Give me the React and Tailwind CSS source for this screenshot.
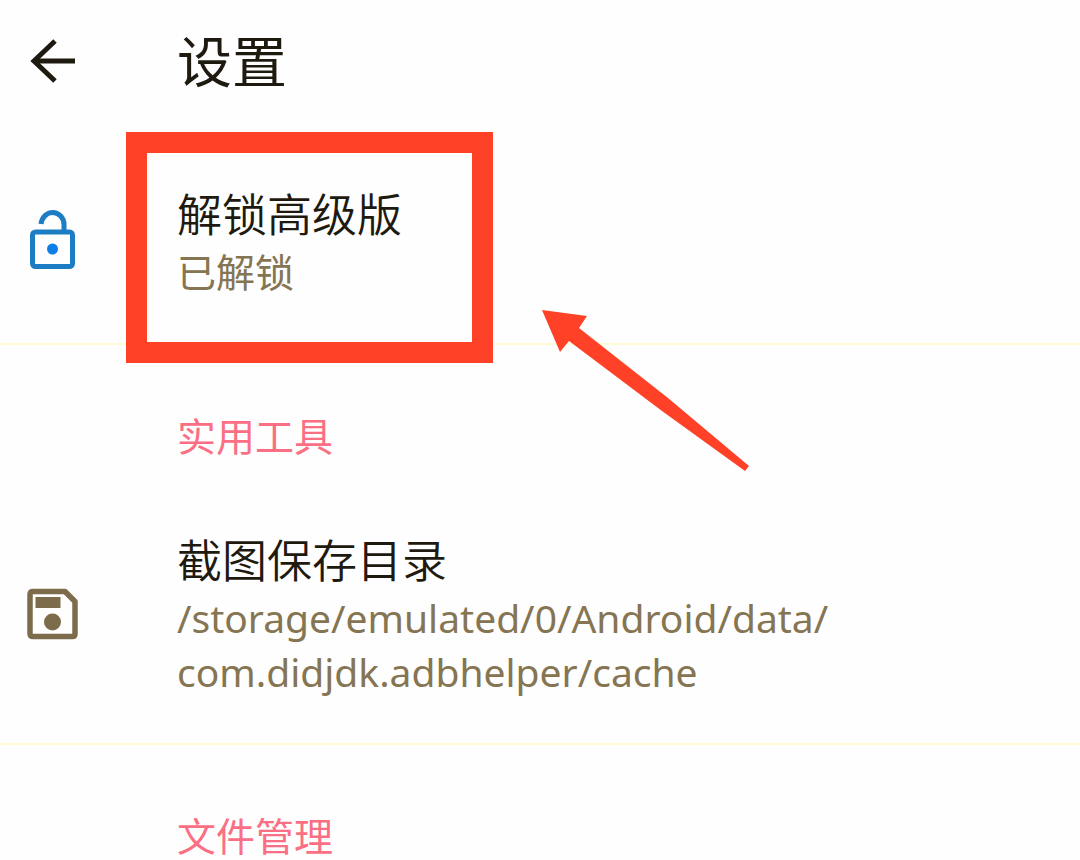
import React from "react";

const BackIcon = () => (
  <svg width="46" height="46" viewBox="0 0 46 46" fill="none" stroke="#1f1a10" strokeWidth="5">
    <path d="M45 23H4" />
    <path d="M25 3L4 23L25 43" />
  </svg>
);

const UnlockIcon = () => (
  <svg width="50" height="64" viewBox="-2 0 50 64" fill="none" stroke="#1c7cc4" strokeWidth="5">
    <rect x="2.5" y="22" width="40" height="34.5" rx="3" />
    <path d="M11 14C12 7 17 2.5 22.5 2.5C29 2.5 34 8 34 14.5V22" />
    <circle cx="22.5" cy="39" r="5.5" fill="#0f7de8" stroke="none" />
  </svg>
);

const SaveIcon = () => (
  <svg
    className="overflow-visible"
    width="52"
    height="52"
    viewBox="1 1 52 52"
    fill="none"
    stroke="#7c6c4c"
    strokeWidth="5.5"
  >
    <path
      d="M6 3.5H38L48 13.5V46Q48 48.5 45.5 48.5H6Q3 48.5 3 45.5V6.5Q3 3.5 6 3.5Z"
      strokeLinejoin="round"
    />
    <rect x="8.5" y="9" width="25" height="11" fill="#7c6c4c" stroke="none" />
    <circle cx="25.5" cy="34" r="8.5" fill="#7c6c4c" stroke="none" />
  </svg>
);

// Red frame drawn around the unlocked entry
const HighlightBox = () => (
  <span className="absolute -top-[53px] -right-[91px] -bottom-16 -left-[51px] border-[21px] border-[#ff4128] pointer-events-none" />
);

const PointerArrow = () => (
  <svg
    className="absolute left-[542px] top-[189px] pointer-events-none"
    width="208"
    height="164"
    viewBox="0 0 208 164"
    fill="#ff4128"
  >
    <path d="M0 0L45 6L37 18L126 88L207 156L203 161L120 101L27 31L18 42Z" />
  </svg>
);

const SettingRow = ({ icon, title, lines, highlighted }) => (
  <button className="relative flex w-full items-center border-b-2 border-[#fffbd6] pt-16 pb-11 pr-8 text-left">
    <span className="flex w-[177px] shrink-0 pl-7">{icon}</span>
    <span className="relative block">
      <span className="block text-[45px] leading-[60px] text-[#1f1a10]">{title}</span>
      {lines.map((line) => (
        <span key={line} className="block text-[39px] leading-[54px] font-normal text-[#857552]">
          {line}
        </span>
      ))}
      {highlighted && <HighlightBox />}
    </span>
    {highlighted && <PointerArrow />}
  </button>
);

const SectionTitle = ({ children }) => (
  <h2 className="pt-16 pb-1 pl-[177px] text-[39px] leading-[54px] font-normal text-[#fb6f84]">
    {children}
  </h2>
);

const App = () => {
  return (
    <div className="min-h-screen bg-[#fefefe] font-['Noto_Sans','Noto_Sans_CJK_SC',sans-serif] font-[350]">
      {/* Header */}
      <header className="flex items-center py-8">
        <div className="flex w-[177px] shrink-0 pl-[30px]">
          <button aria-label="返回">
            <BackIcon />
          </button>
        </div>
        <h1 className="text-[55px] leading-[57px] font-normal text-[#1f1a10]">设置</h1>
      </header>

      <main>
        <SettingRow icon={<UnlockIcon />} title="解锁高级版" lines={["已解锁"]} highlighted />

        <SectionTitle>实用工具</SectionTitle>
        <SettingRow
          icon={<SaveIcon />}
          title="截图保存目录"
          lines={["/storage/emulated/0/Android/data/", "com.didjdk.adbhelper/cache"]}
        />

        <SectionTitle>文件管理</SectionTitle>
      </main>
    </div>
  );
};

export default App;
